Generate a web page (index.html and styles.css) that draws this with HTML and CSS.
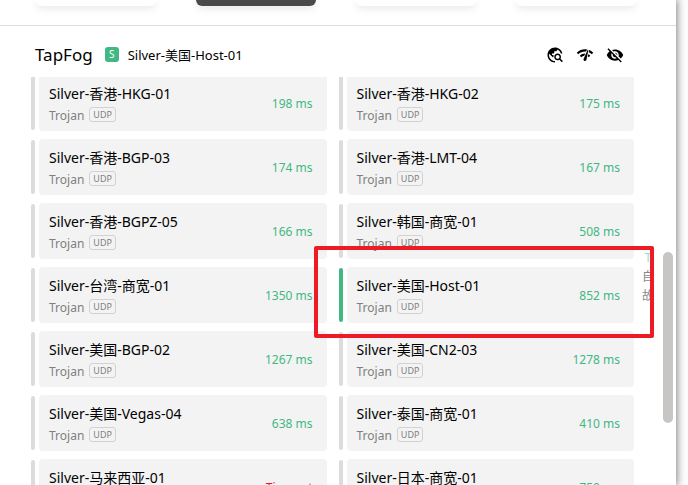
FILE: index.html
```html
<!DOCTYPE html>
<html lang="zh-CN">
<head>
<meta charset="utf-8">
<title>TapFog</title>
<link rel="stylesheet" href="styles.css">
</head>
<body>
<div class="window">
  <nav class="modes">
    <button class="mode" aria-label="Mode 1"></button>
    <button class="mode mode-active" aria-label="Mode 2"></button>
    <button class="mode" aria-label="Mode 3"></button>
    <button class="mode" aria-label="Mode 4"></button>
  </nav>
  <header class="group-head">
    <h1 class="group-name">TapFog</h1>
    <span class="badge">S</span>
    <span class="current">Silver-美国-Host-01</span>
    <div class="tools">
      <button class="tool" aria-label="Locate"><svg viewBox="0 0 24 24"><path d="M19.3 16.9c.4-.7.7-1.5.7-2.4 0-2.500-2-4.500-4.500-4.500S11 12 11 14.500s2 4.500 4.500 4.500c.9 0 1.700-.3 2.400-.7l3.200 3.200 1.400-1.400-3.200-3.200zm-3.800.1c-1.400 0-2.500-1.100-2.500-2.500s1.100-2.500 2.500-2.500 2.500 1.100 2.500 2.500-1.100 2.500-2.500 2.500zM12 20v2C6.480 22 2 17.520 2 12S6.480 2 12 2c4.840 0 8.870 3.440 9.800 8h-2.070c-.64-2.460-2.400-4.470-4.730-5.410V5c0 1.100-.9 2-2 2h-2v2c0 .55-.45 1-1 1H8v2h2v3H9l-4.790-4.790C4.080 10.790 4 11.380 4 12c0 4.410 3.590 8 8 8z"/></svg></button>
      <button class="tool" aria-label="Test latency"><svg viewBox="0 0 24 24"><path d="M15.900 5c-.17 0-.32.090-.41.230l-.07.150-5.180 11.650c-.16.290-.26.610-.26.960 0 1.110.9 2.010 2.010 2.010.96 0 1.770-.68 1.960-1.590l.01-.03L16.400 5.500c0-.28-.22-.5-.5-.5zM1 9l2 2c2.880-2.880 6.790-4.080 10.530-3.620l1.190-2.680C9.890 3.840 4.740 5.270 1 9zm20 2l2-2c-1.640-1.640-3.550-2.820-5.590-3.570l-.53 2.820c1.500.62 2.900 1.530 4.120 2.750zm-4 4l2-2c-.8-.8-1.700-1.420-2.660-1.890l-.55 2.920c.42.270.83.590 1.210.97zM5 13l2 2c1.130-1.130 2.560-1.790 4.030-2l1.280-2.880c-2.630-.08-5.300.87-7.310 2.880z"/></svg></button>
      <button class="tool" aria-label="Hide unavailable"><svg viewBox="0 0 24 24"><path d="M12 7c2.760 0 5 2.240 5 5 0 .65-.13 1.260-.36 1.830l2.920 2.920c1.510-1.260 2.700-2.890 3.430-4.750-1.730-4.390-6-7.500-11-7.500-1.400 0-2.740.25-3.980.7l2.160 2.160C10.740 7.130 11.350 7 12 7zM2 4.270l2.280 2.280.46.46C3.080 8.300 1.780 10.020 1 12c1.730 4.390 6 7.500 11 7.500 1.550 0 3.030-.3 4.380-.84l.42.42L19.730 22 21 20.730 3.270 3 2 4.270zM7.530 9.800l1.550 1.550c-.05.210-.08.430-.08.650 0 1.660 1.340 3 3 3 .22 0 .44-.03.650-.08l1.550 1.550c-.67.330-1.410.530-2.200.530-2.760 0-5-2.240-5-5 0-.79.2-1.530.530-2.200zm4.310-.78l3.150 3.150.02-.16c0-1.660-1.340-3-3-3l-.17.010z"/></svg></button>
    </div>
  </header>
  <main class="scroller">
    <ul class="nodes">
      <li class="node"><div class="card"><div><div class="name">Silver-香港-HKG-01</div><div class="kind">Trojan <span class="udp">UDP</span></div></div><span class="delay">198 ms</span></div></li>
      <li class="node"><div class="card"><div><div class="name">Silver-香港-HKG-02</div><div class="kind">Trojan <span class="udp">UDP</span></div></div><span class="delay">175 ms</span></div></li>
      <li class="node"><div class="card"><div><div class="name">Silver-香港-BGP-03</div><div class="kind">Trojan <span class="udp">UDP</span></div></div><span class="delay">174 ms</span></div></li>
      <li class="node"><div class="card"><div><div class="name">Silver-香港-LMT-04</div><div class="kind">Trojan <span class="udp">UDP</span></div></div><span class="delay">167 ms</span></div></li>
      <li class="node"><div class="card"><div><div class="name">Silver-香港-BGPZ-05</div><div class="kind">Trojan <span class="udp">UDP</span></div></div><span class="delay">166 ms</span></div></li>
      <li class="node"><div class="card"><div><div class="name">Silver-韩国-商宽-01</div><div class="kind">Trojan <span class="udp">UDP</span></div></div><span class="delay">508 ms</span></div></li>
      <li class="node"><div class="card"><div><div class="name">Silver-台湾-商宽-01</div><div class="kind">Trojan <span class="udp">UDP</span></div></div><span class="delay">1350 ms</span></div></li>
      <li class="node node-selected"><div class="card"><div><div class="name">Silver-美国-Host-01</div><div class="kind">Trojan <span class="udp">UDP</span></div></div><span class="delay">852 ms</span></div><div class="marker"></div></li>
      <li class="node"><div class="card"><div><div class="name">Silver-美国-BGP-02</div><div class="kind">Trojan <span class="udp">UDP</span></div></div><span class="delay">1267 ms</span></div></li>
      <li class="node"><div class="card"><div><div class="name">Silver-美国-CN2-03</div><div class="kind">Trojan <span class="udp">UDP</span></div></div><span class="delay">1278 ms</span></div></li>
      <li class="node"><div class="card"><div><div class="name">Silver-美国-Vegas-04</div><div class="kind">Trojan <span class="udp">UDP</span></div></div><span class="delay">638 ms</span></div></li>
      <li class="node"><div class="card"><div><div class="name">Silver-泰国-商宽-01</div><div class="kind">Trojan <span class="udp">UDP</span></div></div><span class="delay">410 ms</span></div></li>
      <li class="node"><div class="card"><div><div class="name">Silver-马来西亚-01</div><div class="kind">Trojan <span class="udp">UDP</span></div></div><span class="delay delay-timeout">Timeout</span></div></li>
      <li class="node"><div class="card"><div><div class="name">Silver-日本-商宽-01</div><div class="kind">Trojan <span class="udp">UDP</span></div></div><span class="delay">750 ms</span></div></li>
    </ul>
  </main>
  <nav class="index"><a class="jump jump-active" href="#t">T</a><a class="jump" href="#auto">自</a><a class="jump" href="#fallback">故</a></nav>
  <div class="thumb"></div>
</div>
</body>
</html>
```
FILE: styles.css
```css
* {
  box-sizing: border-box;
}

body {
  margin: 0;
  height: 100vh;
  overflow: hidden;
  padding-right: 12px;
  background: #fdfdfd;
  color: #000;
  font-family: "Noto Sans", "Noto Sans CJK SC", sans-serif;
  font-size: 14px;
}

button {
  border: 0;
  padding: 0;
  background: none;
}

.window {
  position: relative;
  height: 100%;
  display: flex;
  flex-direction: column;
  background: #fff;
  box-shadow: 0 0 8px 1px rgba(0, 0, 0, 0.5);
}

.modes {
  display: grid;
  grid-template-columns: repeat(4, 1fr);
  gap: 40px;
  padding: 0 40px 19px 36px;
  border-bottom: 1px solid #dcdcdc;
}

.mode {
  height: 6px;
  border-radius: 0 0 6px 6px;
  background: #fff;
  box-shadow: 0 2px 8px rgba(0, 0, 0, 0.12);
}

.mode-active {
  background: #4a4a4a;
}

.group-head {
  display: flex;
  align-items: center;
  height: 51px;
  padding: 6px 52px 0 35px;
}

.group-name {
  margin: 0;
  font-size: 17px;
  font-weight: 400;
}

.badge {
  width: 14px;
  margin: 0 9px 0 12px;
  border-radius: 3px;
  background: #41b883;
  color: #fff;
  font-size: 10px;
  line-height: 15px;
  text-align: center;
}

.current {
  font-size: 13px;
}

.tools {
  display: flex;
  gap: 12px;
  margin-left: auto;
}

.tool {
  width: 18px;
  height: 18px;
}

.tool svg {
  display: block;
}

.scroller {
  flex: 1;
  min-height: 0;
  overflow: hidden;
  padding: 0 42px 0 31px;
}

.nodes {
  display: grid;
  grid-template-columns: 1fr 1fr;
  gap: 8px 12px;
  margin: -2px 0 0;
  padding: 0;
  list-style: none;
}

.node {
  position: relative;
  display: flex;
  gap: 4px;
}

.node::before {
  content: "";
  width: 4px;
  margin: 1px 0;
  border-radius: 2px;
  background: #dcdcdc;
}

.node-selected::before {
  background: #41b883;
}

.card {
  flex: 1;
  height: 56px;
  display: flex;
  align-items: center;
  justify-content: space-between;
  padding: 0 14px 0 10px;
  border-radius: 4px;
  background: #f3f3f3;
}

.name {
  padding-top: 2px;
  line-height: 22px;
}

.kind {
  display: flex;
  align-items: flex-start;
  gap: 5px;
  color: #808080;
  font-size: 12px;
  line-height: 21px;
}

.udp {
  margin-top: 2px;
  padding: 0 3px;
  border: 1px solid #d2d2d2;
  border-radius: 3px;
  font-size: 9px;
  line-height: 13px;
}

.delay {
  color: #41b883;
  font-size: 12px;
}

.delay-timeout {
  color: #e8192c;
}

.marker {
  position: absolute;
  z-index: 2;
  inset: -21px -20px -15px -25px;
  border: 4px solid #ed1c24;
  border-radius: 2px;
}

.index {
  position: absolute;
  top: 248px;
  right: 22px;
  width: 12px;
  display: flex;
  flex-direction: column;
  font-size: 12px;
  line-height: 19px;
  text-align: center;
}

.jump {
  color: #888;
  text-decoration: none;
}

.jump-active {
  color: #a3dcc3;
}

.thumb {
  position: absolute;
  top: 252px;
  right: 3px;
  width: 10px;
  height: 171px;
  border-radius: 5px;
  background: #c7c6c5;
}
```
